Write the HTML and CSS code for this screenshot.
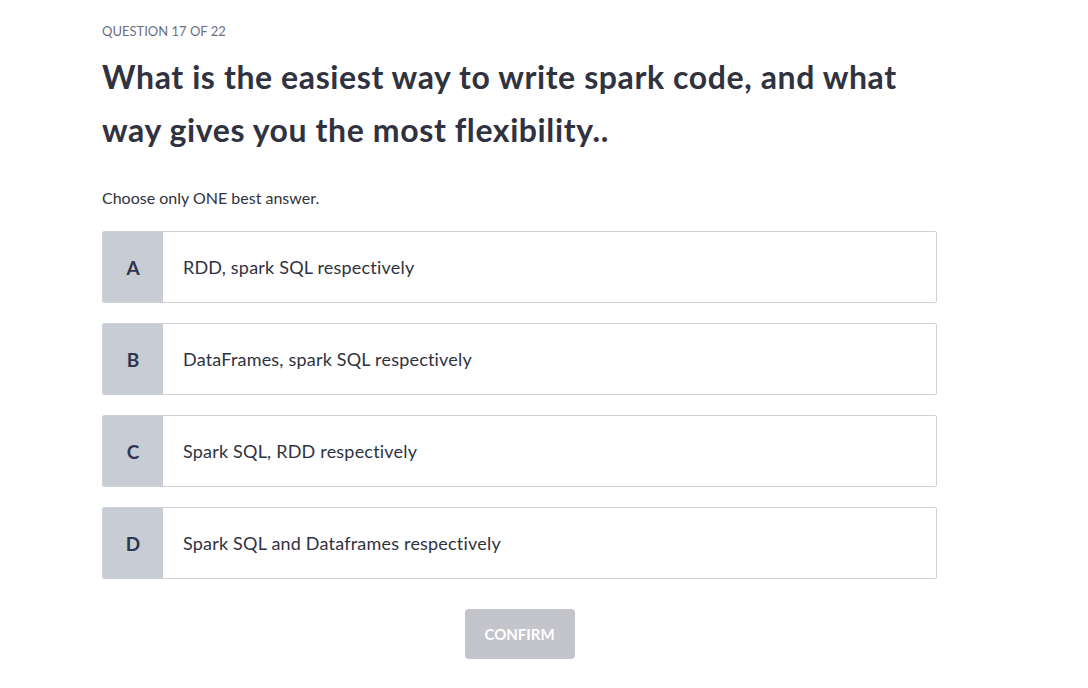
FILE: index.html
```html
<!DOCTYPE html>
<html>
<head>
<meta charset="utf-8">
<link rel="stylesheet" href="styles.css">
</head>
<body>
<main class="quiz">
  <div class="counter">QUESTION 17 OF 22</div>
  <h1 class="question">What is the easiest way to write spark code, and what way gives you the most flexibility..</h1>
  <p class="hint">Choose only ONE best answer.</p>
  <ul class="options">
    <li class="option"><span class="letter">A</span><span class="text">RDD, spark SQL respectively</span></li>
    <li class="option"><span class="letter">B</span><span class="text">DataFrames, spark SQL respectively</span></li>
    <li class="option"><span class="letter">C</span><span class="text">Spark SQL, RDD respectively</span></li>
    <li class="option"><span class="letter">D</span><span class="text">Spark SQL and Dataframes respectively</span></li>
  </ul>
  <div class="actions"><button class="confirm">CONFIRM</button></div>
</main>
</body>
</html>
```
FILE: styles.css
```css
html, body { margin: 0; padding: 0; background: #fff; }
body { font-family: Lato, "Open Sans", sans-serif; color: #2e3142; }
.quiz { width: 835px; padding: 22px 0 0 102px; }
.counter { font-size: 13px; color: #6b7080; line-height: 18px; }
.question { margin: 10px 0 0; font-size: 32px; font-weight: 700; letter-spacing: 0.6px; line-height: 53px; color: #30333f; width: 830px; }
.hint { margin: 31px 0 0; font-size: 16px; line-height: 22px; color: #30333f; }
.options { list-style: none; margin: 22px 0 0; padding: 0; display: flex; flex-direction: column; gap: 20px; }
.option { display: flex; height: 72px; border: 1px solid #cdd0d6; border-radius: 2px; box-sizing: border-box; overflow: hidden; }
.letter { width: 60px; background: #c8ccd5; display: flex; align-items: center; justify-content: center; font-size: 19px; font-weight: 700; color: #2f3650; }
.text { display: flex; align-items: center; padding-left: 20px; font-size: 18px; letter-spacing: 0.2px; color: #30333f; }
.actions { display: flex; justify-content: center; margin-top: 30px; }
.confirm { width: 110px; height: 50px; border: 0; border-radius: 4px; background: #c4c5cb; color: #fff; font-family: inherit; font-weight: 700; font-size: 15px; }
```
